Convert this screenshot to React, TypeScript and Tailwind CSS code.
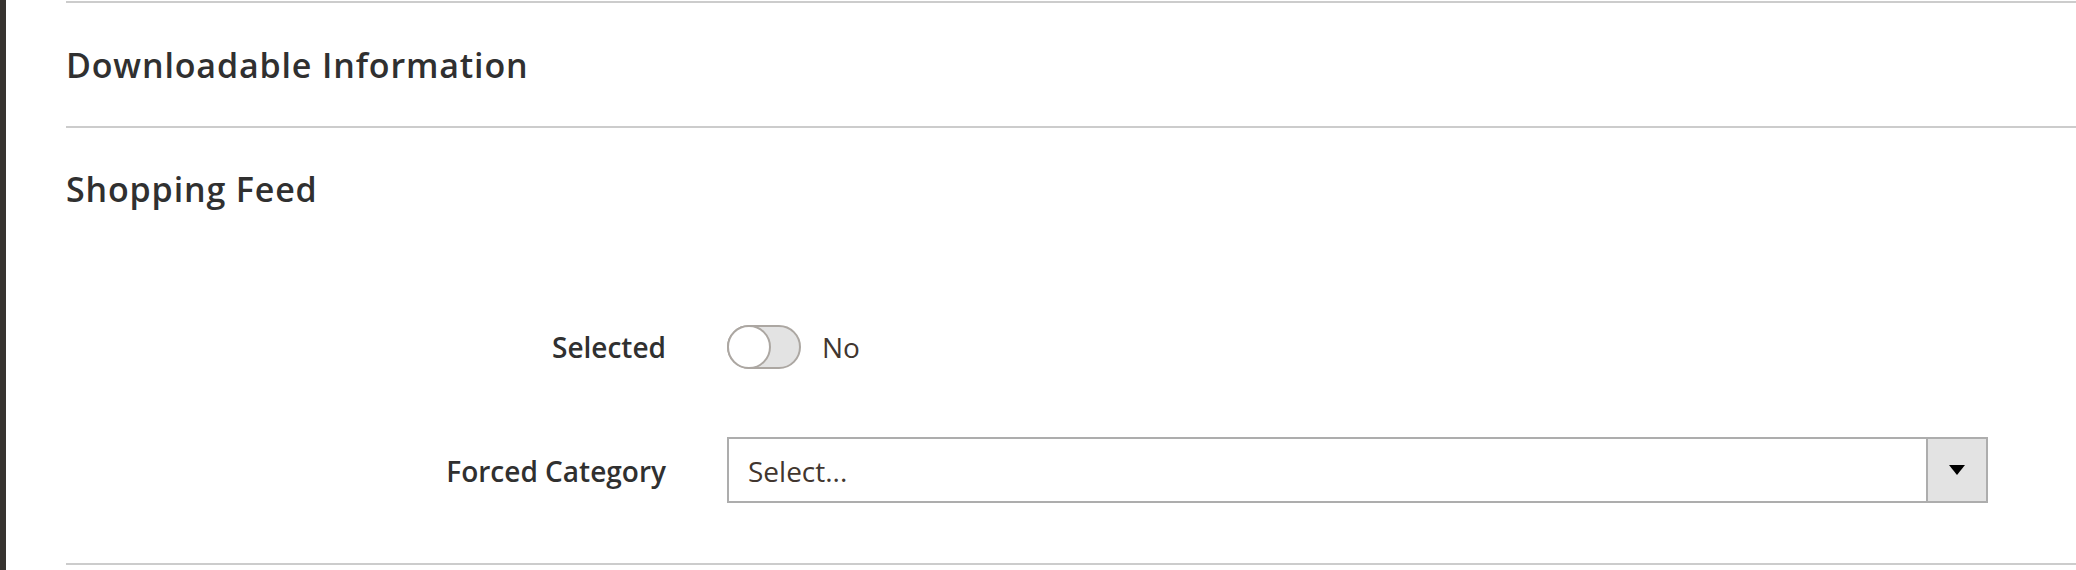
import React from "react";

export default function App() {
  return (
    <div
      className="flex h-[570px] w-full bg-white"
      style={{ fontFamily: '"Open Sans", "Noto Sans", sans-serif' }}
    >
      <div className="w-[6px] shrink-0 bg-[#373330]" />
      <div className="flex flex-1 flex-col pl-[60px]">
        <div className="mt-[1px] h-[2px] bg-[#cccccc]" />
        <div className="flex h-[123px] items-center">
          <h2 className="text-[34px] leading-[40px] font-semibold tracking-[0.025em] text-[#303030]">
            Downloadable Information
          </h2>
        </div>
        <div className="h-[2px] bg-[#cccccc]" />
        <div className="pt-[41px]">
          <h2 className="text-[34px] leading-[40px] font-semibold tracking-[0.025em] text-[#303030]">
            Shopping Feed
          </h2>
        </div>
        <div className="mt-[116px] flex h-[44px] items-center">
          <div className="w-[600px] text-right text-[28px] leading-[44px] font-semibold text-[#303030]">
            Selected
          </div>
          <div className="ml-[61px] flex items-center">
            <div className="relative h-[44px] w-[74px] rounded-full border-2 border-[#aca7a2] bg-[#e3e3e3]">
              <div className="absolute top-[-2px] left-[-2px] h-[44px] w-[44px] rounded-full border-2 border-[#aca7a2] bg-white" />
            </div>
            <span className="ml-[21px] text-[28px] leading-[44px] text-[#41362f]">No</span>
          </div>
        </div>
        <div className="mt-[68px] flex h-[66px] items-center">
          <div className="w-[600px] pt-[2px] text-right text-[28px] leading-[44px] font-semibold text-[#303030]">
            Forced Category
          </div>
          <div className="ml-[61px] flex h-[66px] w-[1261px] border-2 border-[#adadad] bg-white">
            <div className="flex flex-1 items-center pl-[19px] pt-[1px] text-[28px] leading-[44px] text-[#41362f]">
              Select...
            </div>
            <div className="flex w-[60px] items-center justify-center border-l-2 border-[#adadad] bg-[#e3e3e3]">
              <svg width="16" height="10" viewBox="0 0 16 10">
                <polygon points="0,0 16,0 8,10" fill="#000" />
              </svg>
            </div>
          </div>
        </div>
        <div className="mt-[60px] h-[2px] bg-[#cccccc]" />
      </div>
    </div>
  );
}
